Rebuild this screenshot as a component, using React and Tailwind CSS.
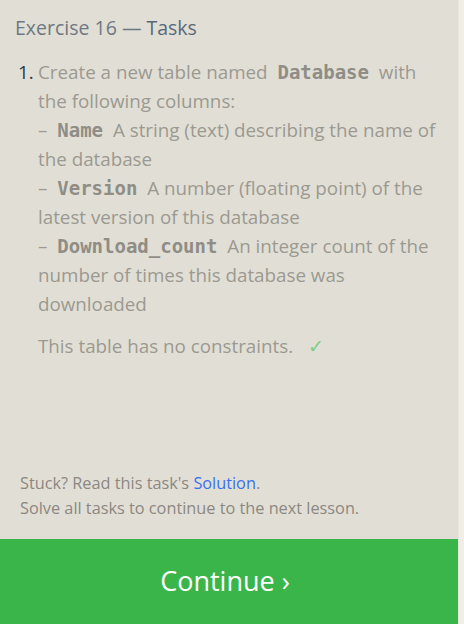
import React from 'react';

const Code = ({ children }) => (
  <code className="px-[5px] font-['DejaVu_Sans_Mono',monospace] text-[19px] leading-[29px] font-bold text-[#8f8d86]">
    {children}
  </code>
);

const App = () => {
  return (
    <div className="flex h-[624px] w-[464px] bg-[#f1eee8] font-['Open_Sans',sans-serif]">
      <div className="flex w-[458px] flex-col bg-[#e1dfd5]">
        <div className="flex-1 px-[15px] pt-[14px]">
          <h2 className="text-[19.5px] leading-[28px] text-[#6f7882]">
            Exercise 16 — <span className="text-[#58687a]">Tasks</span>
          </h2>

          <ol className="mt-[16px] pl-[3px]">
            <li className="flex text-[18.8px] leading-[29px] text-[#9b9991]">
              <span className="w-[20px] shrink-0 text-[#2f3a45]">1.</span>
              <div>
                <p>
                  Create a new table named <Code>Database</Code> with the following columns:
                  <br />– <Code>Name</Code> A string (text) describing the name of the database
                  <br />– <Code>Version</Code> A number (floating point) of the latest version of this database
                  <br />– <Code>Download_count</Code> An integer count of the number of times this database was downloaded
                </p>
                <p className="mt-[13px]">
                  This table has no constraints. <span className="ml-[10px] text-[#7fcb85]">✓</span>
                </p>
              </div>
            </li>
          </ol>
        </div>

        <div className="px-[20px] pb-[18px] text-[16.3px] leading-[25px] text-[#8c8782]">
          <p>
            Stuck? Read this task's <a className="text-[#3a6ff0]">Solution</a>.
          </p>
          <p>Solve all tasks to continue to the next lesson.</p>
        </div>

        <button className="flex h-[85px] w-full items-center justify-center bg-[#3ab54a] pr-[8px] text-[27px] text-white">
          Continue ›
        </button>
      </div>
      <div className="w-[6px] border-l border-[#e9e6de]" />
    </div>
  );
};

export default App;
